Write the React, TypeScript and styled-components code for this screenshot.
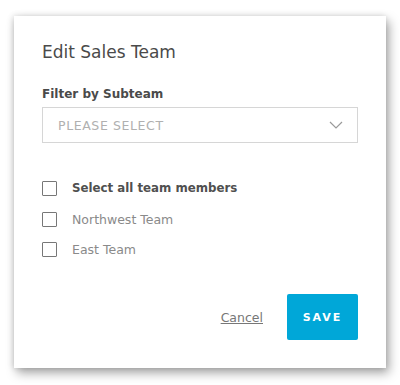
import styled, { createGlobalStyle } from 'styled-components';

const GlobalStyle = createGlobalStyle`
  body {
    margin: 0;
    background: #fff;
    font-family: "DejaVu Sans", "Noto Sans", sans-serif;
  }
`;

const Page = styled.div`
  width: 400px;
  height: 385px;
  padding: 16px 14px 0 14px;
  box-sizing: border-box;
`;

const Dialog = styled.div`
  width: 372px;
  height: 352px;
  background: #fff;
  box-sizing: border-box;
  padding: 25px 28px 28px 28px;
  box-shadow: 3px 5px 10px rgba(0, 0, 0, 0.35), -1px 0 6px rgba(0, 0, 0, 0.14);
  display: flex;
  flex-direction: column;
`;

const Title = styled.h2`
  margin: 0;
  font-size: 17px;
  font-weight: 400;
  color: #4a4a4a;
  line-height: 22px;
`;

const Label = styled.div`
  margin-top: 23px;
  font-size: 12px;
  font-weight: 600;
  color: #4a4a4a;
  line-height: 16px;
`;

const Select = styled.div`
  margin-top: 5px;
  height: 36px;
  border: 1px solid #d6d6d6;
  box-sizing: border-box;
  display: flex;
  align-items: center;
  justify-content: space-between;
  padding: 0 14px 0 15px;
  font-size: 12.5px;
  letter-spacing: 0.6px;
  color: #b0b0b0;
`;

const List = styled.div`
  margin-top: 38px;
  display: flex;
  flex-direction: column;
  gap: 15.5px;
`;

const Row = styled.label<{ $strong?: boolean }>`
  display: flex;
  align-items: center;
  gap: 15px;
  font-size: ${(p) => (p.$strong ? '11.8px' : '12.5px')};
  color: ${(p) => (p.$strong ? '#505050' : '#8a8a8a')};
  font-weight: ${(p) => (p.$strong ? 600 : 400)};
  line-height: 15px;
`;

const Box = styled.span`
  width: 15px;
  height: 15px;
  border: 1px solid #777;
  box-sizing: border-box;
  border-radius: 1px;
`;

const Footer = styled.div`
  margin-top: auto;
  display: flex;
  justify-content: flex-end;
  align-items: center;
  gap: 24px;
`;

const Cancel = styled.a`
  font-size: 12.5px;
  color: #777;
  text-decoration: underline;
  cursor: pointer;
`;

const Save = styled.button`
  width: 71px;
  height: 46px;
  border: none;
  border-radius: 2px;
  background: #00a7d8;
  color: #fff;
  font-family: inherit;
  font-weight: 700;
  font-size: 11px;
  letter-spacing: 2px;
`;

export default function App() {
  return (
    <Page>
      <GlobalStyle />
      <Dialog>
        <Title>Edit Sales Team</Title>
        <Label>Filter by Subteam</Label>
        <Select>
          <span>PLEASE SELECT</span>
          <svg width="14" height="8" viewBox="0 0 14 8">
            <path d="M1 1l6 6 6-6" fill="none" stroke="#9a9a9a" strokeWidth="1.2" />
          </svg>
        </Select>
        <List>
          <Row $strong>
            <Box />
            Select all team members
          </Row>
          <Row>
            <Box />
            Northwest Team
          </Row>
          <Row>
            <Box />
            East Team
          </Row>
        </List>
        <Footer>
          <Cancel>Cancel</Cancel>
          <Save>SAVE</Save>
        </Footer>
      </Dialog>
    </Page>
  );
}
